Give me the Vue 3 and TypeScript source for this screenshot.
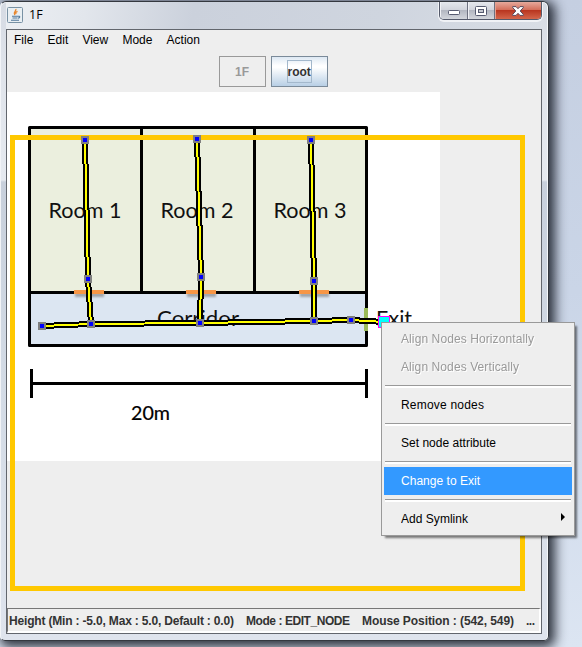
<script setup lang="ts">
import { ref } from 'vue'

interface Pt { x: number; y: number }
interface Entry { label: string; disabled?: boolean; submenu?: boolean; width: number }

const menus = ['File', 'Edit', 'View', 'Mode', 'Action']
const active = ref('Change to Exit')

const groups: Entry[][] = [
  [
    { label: 'Align Nodes Horizontally', disabled: true, width: 133 },
    { label: 'Align Nodes Vertically', disabled: true, width: 118 },
  ],
  [{ label: 'Remove nodes', width: 83 }],
  [{ label: 'Set node attribute', width: 95 }],
  [{ label: 'Change to Exit', width: 79 }],
  [{ label: 'Add Symlink', submenu: true, width: 67 }],
]

const nodes: Pt[] = [
  { x: 85, y: 140 }, { x: 88, y: 279 }, { x: 91, y: 324 },
  { x: 197, y: 139 }, { x: 201, y: 277 }, { x: 200, y: 323 },
  { x: 311, y: 140 }, { x: 314, y: 281 }, { x: 314, y: 321 },
  { x: 42, y: 326 }, { x: 351, y: 320 },
]
const links = [
  '85,140 88,279 91,324',
  '197,139 201,277 200,323',
  '311,140 314,281 314,321',
  '42,326 91,324 200,323 314,321 351,320 384,322',
]
const doors = [74, 186, 299]
const rooms = [
  { label: 'Room 1', x: 48.5 },
  { label: 'Room 2', x: 160.5 },
  { label: 'Room 3', x: 273.5 },
]
</script>

<template>
  <div class="desktop">
    <div class="window">
      <header class="titlebar">
        <svg class="java" width="16" height="16" viewBox="0 0 16 16">
          <rect x=".5" y=".5" width="15" height="15" rx="1" fill="#e9eff3" stroke="#7891a4" />
          <path d="M8.8 2C10 4 5.5 4.800 7.800 8M10.500 4.400C8 5.500 8.500 6.300 9.200 7.200" fill="none" stroke="#e8862c" stroke-width="1.300" />
          <path d="M5 9.300h6M5.500 11h5M4 13.200h8M11 9.300c2.500-.6 2.200 1.600 0 1.900" fill="none" stroke="#52789a" stroke-width="1.100" />
        </svg>
        <span class="title">1F</span>
        <div class="controls">
          <span class="ctl min">
            <svg width="12" height="5"><rect x=".5" y=".5" width="11" height="4" rx="1" fill="#fff" stroke="#565b70" /></svg>
          </span>
          <span class="ctl max">
            <svg width="12" height="10">
              <rect x=".5" y=".5" width="11" height="9" rx="1" fill="#fff" stroke="#565b70" />
              <rect x="3.500" y="3.500" width="5" height="3" fill="#c5c8d0" stroke="#565b70" />
            </svg>
          </span>
          <span class="ctl close">
            <svg width="12" height="10" viewBox="0 0 12 10">
              <path d="M.7.600H4L6 2.700 8 .6h3.300v1L8.200 5l3.100 3.400v1H8L6 7.300 4 9.400H.7v-1L3.800 5 .7 1.600z" fill="#fff" stroke="#5b4a5c" />
            </svg>
          </span>
        </div>
      </header>

      <main class="content">
        <nav class="menubar">
          <span v-for="m in menus" :key="m">{{ m }}</span>
        </nav>
        <div class="toolbar">
          <button class="tab off" disabled>1F</button>
          <button class="tab on"><span>root</span></button>
        </div>

        <svg class="canvas" width="534" height="516" viewBox="7 92 534 516">
          <defs>
            <filter id="soft" x="-20%" y="-100%" width="140%" height="400%"><feGaussianBlur stdDeviation="1.200" /></filter>
          </defs>
          <rect x="7" y="92" width="433" height="369" fill="#fff" />
          <g shape-rendering="crispEdges">
            <rect x="29" y="127" width="338" height="166" fill="#ebefde" />
            <rect x="29" y="292" width="338" height="54" fill="#dce6f2" />
          </g>
          <rect x="29.500" y="127.500" width="337" height="218" fill="none" stroke="#000" stroke-width="3" stroke-linejoin="round" />
          <path d="M141.500 127V292M254.500 127V292M30 292.500H366" stroke="#000" stroke-width="3" />
          <g v-for="d in doors" :key="d">
            <rect :x="d + 1" y="293" width="29" height="4" fill="#777" opacity=".6" filter="url(#soft)" />
            <rect :x="d" y="290" width="30" height="4" fill="#f79646" />
          </g>
          <rect x="364" y="308" width="4" height="23" fill="#9bbb59" />
          <path d="M31.500 369V398M366.500 369V398M31 383.500H366" stroke="#000" stroke-width="3" />

          <g class="plan">
            <text v-for="r in rooms" :key="r.label" :x="r.x" y="218" textLength="73" lengthAdjust="spacingAndGlyphs">{{ r.label }}</text>
            <text x="157" y="325.500" textLength="82" lengthAdjust="spacingAndGlyphs">Corridor</text>
            <text x="376" y="326" textLength="36" lengthAdjust="spacingAndGlyphs">Exit</text>
            <text class="scale" x="131" y="420" textLength="39" lengthAdjust="spacingAndGlyphs">20m</text>
          </g>

          <rect x="12.500" y="137.500" width="510" height="451" fill="none" stroke="#ffc800" stroke-width="5" />
          <g fill="none" shape-rendering="crispEdges">
            <polyline v-for="l in links" :key="l" :points="l" stroke="#000" stroke-width="6" />
            <polyline v-for="l in links" :key="'y' + l" :points="l" stroke="#ff0" stroke-width="2" />
          </g>
          <g v-for="(n, i) in nodes" :key="i">
            <rect :x="n.x - 4" :y="n.y - 4" width="8" height="8" fill="#808080" />
            <rect :x="n.x - 2" :y="n.y - 2" width="4" height="4" fill="#00f" />
          </g>
          <rect x="378.500" y="316.500" width="11" height="11" fill="#0ff" stroke="#f0f" />
        </svg>

        <footer class="status">
          <svg width="530" height="20">
            <text x="0" y="14" textLength="225">Height (Min : -5.0, Max : 5.0, Default : 0.0)</text>
            <text x="237" y="14" textLength="104">Mode : EDIT_NODE</text>
            <text x="353" y="14" textLength="152">Mouse Position : (542, 549)</text>
            <text x="517" y="14" textLength="9">...</text>
          </svg>
        </footer>
      </main>
    </div>

    <div class="popup">
      <template v-for="(g, gi) in groups" :key="gi">
        <div v-if="gi" class="sep"></div>
        <div
          v-for="e in g"
          :key="e.label"
          class="item"
          :class="{ disabled: e.disabled, active: e.label === active }"
        >
          <svg width="140" height="20"><text x="0" y="14" :textLength="e.width">{{ e.label }}</text></svg>
          <i v-if="e.submenu" class="arrow"></i>
        </div>
      </template>
    </div>
  </div>
</template>

<style>
body {
  overflow: hidden;
}
</style>

<style scoped>
* {
  box-sizing: border-box;
}
.desktop {
  position: relative;
  width: 582px;
  height: 647px;
  overflow: hidden;
  padding-top: 1px;
  background: linear-gradient(180deg, #c5cfe1 0, #cad5e7 45%, #dce5f2 100%);
  font: 12px "Liberation Sans", Arial, sans-serif;
  color: #000;
}
.window {
  width: 549px;
  height: 640px;
  padding: 0 6px 6px 5px;
  border: 1px solid #34383f;
  border-left-color: #f2f4f7;
  border-radius: 6px 6px 5px 5px;
  background: linear-gradient(180deg, #d5dae3 0, #dfe3ea 60px, #e6eaf0 178px, #c8d0dc 180px, #d3dbe6 380px, #dfe4ed 100%);
  box-shadow: 3px 3px 12px 3px rgba(15, 20, 30, 0.85), inset -1px 0 0 #f4f7fa, inset 0 1px 0 #f0f2f6;
}
.titlebar {
  display: flex;
  height: 27px;
  margin-right: 1px;
  background: linear-gradient(100deg, #eceff3 0, #e2e6ec 15%, #cbd1dc 35%, #cfd5df 70%, #d8dde5 100%);
}
.java {
  margin: 5px 0 0 1px;
}
.title {
  margin: 5px 0 0 6px;
  font: 12.500px/16px "Open Sans", "Noto Sans", sans-serif;
}
.controls {
  display: flex;
  width: 103px;
  height: 18px;
  margin-left: auto;
  margin-right: -1px;
  border: 1px solid #555a6b;
  border-top: 0;
  border-radius: 0 0 5px 5px;
  overflow: hidden;
  box-shadow: 0 1px 0 1px #f0f2f6;
}
.ctl {
  display: flex;
  align-items: center;
  justify-content: center;
  width: 28px;
  border-right: 1px solid #6d7180;
  background: linear-gradient(180deg, #e5e8ed 0, #d1d4dc 47%, #b3b7c1 50%, #d3d6dc 100%);
  box-shadow: inset 1px 0 0 #f0f1f5;
}
.ctl svg {
  flex: none;
}
.ctl.min {
  padding-top: 4px;
}
.ctl.max {
  width: 27px;
}
.ctl.close {
  flex: 1;
  border: 0;
  background: linear-gradient(180deg, #e6a99c 0, #d4705c 45%, #b93620 50%, #d4664b 100%);
  box-shadow: inset 1px 0 0 #e6a090;
}
.content {
  display: flex;
  flex-direction: column;
  width: 536px;
  height: 605px;
  border: 1px solid #62666d;
  background: #eee;
}
.menubar {
  display: flex;
  gap: 14.200px;
  height: 21px;
  padding: 3px 0 0 7px;
  line-height: 14px;
}
.toolbar {
  display: flex;
  justify-content: center;
  gap: 5px;
  height: 41px;
  padding: 5px 2px 0 0;
}
.tab {
  height: 31px;
  padding: 0;
  border: 1px solid #999;
  background: #eee;
  font: bold 12px "Liberation Sans", Arial, sans-serif;
}
.tab.off {
  width: 47px;
  color: #999;
}
.tab.on {
  width: 57px;
  border-color: #7a8a99;
  background: linear-gradient(180deg, #dde8f3 0, #fff 30%, #fff 36%, #b8cfe5 100%);
  color: #333;
}
.tab span {
  display: inline-block;
  width: 25px;
  height: 23px;
  border: 1px solid #a3b8cc;
  line-height: 22px;
}
.canvas {
  display: block;
  flex: none;
}
.plan {
  font-family: Lato, sans-serif;
  font-size: 21px;
  fill: #111;
}
.scale {
  font-size: 18.500px;
  fill: #000;
  stroke: #000;
  stroke-width: 0.2px;
}
.status {
  flex: 1;
  border: 1px solid #8b8b8b;
  border-color: #777 #fff #fff #777;
  border-right-width: 2px;
  border-bottom-width: 2px;
  font-weight: bold;
}
.status svg {
  display: block;
  margin: 2px 0 0 1px;
  fill: #333;
}
.popup {
  position: absolute;
  left: 381px;
  top: 322px;
  width: 194px;
  height: 214px;
  padding: 2px;
  border: 1px solid #999;
  background: #eee;
  box-shadow: 3px 3px 2px -1px rgba(0, 0, 0, 0.5);
}
.item {
  display: flex;
  align-items: center;
  height: 28px;
  padding-left: 17px;
}
.item svg {
  display: block;
  flex: none;
}
.item.disabled {
  fill: #999;
}
.item.disabled svg {
  filter: drop-shadow(1px 1px 0 #fff);
}
.item.active {
  background: #39f;
  fill: #fff;
}
.sep {
  height: 10px;
  padding: 4px 1px;
}
.sep::before {
  content: "";
  display: block;
  height: 2px;
  border-top: 1px solid #999;
  background: #fff;
}
.arrow {
  margin: -4px 0 0 20px;
  border: 4px solid transparent;
  border-left-color: #000;
  border-right: 0;
}
</style>
